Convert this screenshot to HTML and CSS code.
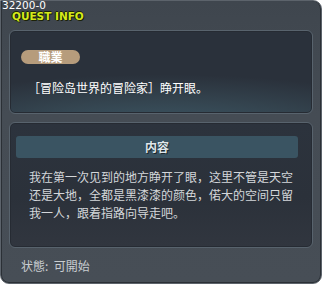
FILE: index.html
```html
<!DOCTYPE html>
<html lang="en">
<head>
    <meta charset="UTF-8">
    <title>Quest Info</title>
    <link rel="stylesheet" href="styles.css">
</head>
<body>
    <div class="window">
        <!-- Title -->
        <div class="title-bar">
            <div class="quest-id">32200-0</div>
            <div class="quest-title">QUEST INFO</div>
        </div>

        <!-- Job panel -->
        <div class="panel job-panel">
            <span class="badge">職業</span>
            <p class="job-text">［冒险岛世界的冒险家］睁开眼。</p>
        </div>

        <!-- Content panel -->
        <div class="panel content-panel">
            <div class="content-head">内容</div>
            <p class="content-text">我在第一次见到的地方睁开了眼，这里不管是天空还是大地，全都是黑漆漆的颜色，偌大的空间只留我一人，跟着指路向导走吧。</p>
        </div>

        <div class="status">状態:&nbsp; 可開始</div>
    </div>
</body>
</html>
```

FILE: styles.css
```css
body {
    margin: 0;
    padding: 0;
    background-color: #ffffff;
    font-family: "Noto Sans CJK SC", "DejaVu Sans", sans-serif;
}

/* Outer frame */
.window {
    width: 322px;
    height: 284px;
    box-sizing: border-box;
    background: linear-gradient(#3f464e, #454c54 40%, #474e56);
    border: 1px solid #5c636b;
    border-radius: 0 9px 9px 9px;
    box-shadow: inset 1px 0 0 #2b3036, inset -1px 0 0 #2b3036, inset 0 -1px 0 #2b3036;
    padding: 0 8px 0 8px;
    display: flex;
    flex-direction: column;
}

.title-bar {
    height: 29px;
    position: relative;
}

.quest-id {
    position: absolute;
    left: -7px;
    top: 0;
    font-family: "DejaVu Sans", sans-serif;
    font-size: 10.5px;
    line-height: 9px;
    color: #ffffff;
}

.quest-title {
    position: absolute;
    left: 3px;
    top: 10px;
    font-family: "DejaVu Sans", sans-serif;
    font-weight: bold;
    font-size: 10.5px;
    line-height: 10px;
    color: #d6ea1a;
    text-shadow: 1px 1px 0 #1c2208, -1px 0 0 #1c2208, 0 -1px 0 #1c2208;
}

/* Panels */
.panel {
    border: 1px solid #58636d;
    border-radius: 6px;
    box-shadow: inset 0 0 0 1px #262b33;
    box-sizing: border-box;
}

.job-panel {
    height: 84px;
    padding: 12px 0 0 11px;
    background: radial-gradient(ellipse 120% 90% at 50% 125%, #3e5b69 0%, #34444f 45%, #2a313b 80%);
}

.badge {
    display: inline-block;
    width: 59px;
    height: 14px;
    line-height: 14px;
    border-radius: 7px;
    background-color: #b69c7c;
    color: #ffffff;
    font-size: 12px;
    font-weight: bold;
    text-align: center;
}

.job-text {
    margin: 13px 0 0 7px;
    font-size: 12px;
    line-height: 16px;
    color: #ffffff;
}

.content-panel {
    margin-top: 8px;
    height: 126px;
    padding: 13px 14px 0 6px;
    background: linear-gradient(#2c333d, #2b313a 60%, #31363f);
}

.content-head {
    height: 22px;
    line-height: 22px;
    border-radius: 3px;
    background-color: #3a5462;
    color: #dfe6ea;
    font-size: 12px;
    font-weight: bold;
    text-align: center;
    text-shadow: 1px 1px 0 #1b252b;
}

.content-text {
    margin: 10px 0 0 13px;
    font-size: 12px;
    line-height: 18px;
    color: #d4d7da;
}

.status {
    margin: 9px 0 0 12px;
    font-size: 12px;
    color: #c9cdd1;
}
```
